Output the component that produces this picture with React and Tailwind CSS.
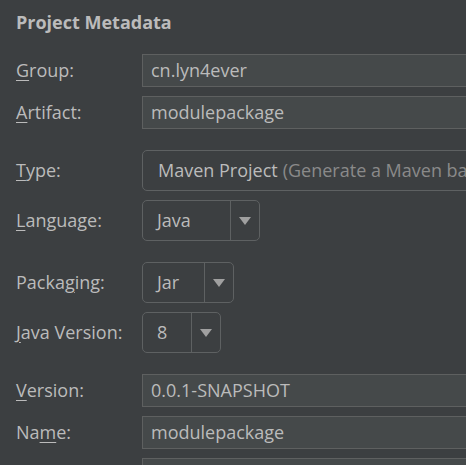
const font = { fontFamily: '"Open Sans", "Noto Sans", sans-serif' }

function Label({ pre, u, post }) {
  return (
    <span className="text-[18px] text-[#bbbbbb] leading-none">
      {pre}
      <span className="underline underline-offset-[3px] decoration-1">{u}</span>
      {post}
    </span>
  )
}

function TextField({ value }) {
  return (
    <div className="h-[33px] w-[340px] shrink-0 bg-[#45494a] border border-[#5e6060] flex items-center pl-[8px] text-[18px] text-[#bbbbbb]">
      {value}
    </div>
  )
}

function Combo({ value, width }) {
  return (
    <div className={`h-[41px] ${width} shrink-0 border border-[#5e6162] rounded-[5px] flex items-stretch`}>
      <div className="flex-1 flex items-center pl-[14px] text-[18px] text-[#bbbbbb]">{value}</div>
      <div className="w-[29px] border-l border-[#5e6162] flex items-center justify-center">
        <svg width="12" height="8" viewBox="0 0 12 8"><path d="M0 0h12L6 8z" fill="#a0a0a0" /></svg>
      </div>
    </div>
  )
}

function Row({ label, children }) {
  return (
    <div className="flex items-center">
      <div className="w-[126px] shrink-0">{label}</div>
      {children}
    </div>
  )
}

export default function App() {
  return (
    <div className="w-[466px] h-[465px] overflow-hidden bg-[#3c3f41] pl-4" style={font}>
      <h1 className="pt-[9px] text-[18px] font-bold text-[#bbbbbb] leading-[26px]">Project Metadata</h1>

      <div className="mt-[19px] flex flex-col gap-[9px]">
        <Row label={<Label u="G" post="roup:" />}><TextField value="cn.lyn4ever" /></Row>
        <Row label={<Label u="A" post="rtifact:" />}><TextField value="modulepackage" /></Row>
      </div>

      <div className="mt-[21px] flex flex-col gap-[9px]">
        <Row label={<Label u="T" post="ype:" />}>
          <div className="h-[41px] w-[340px] shrink-0 overflow-hidden border border-[#5e6162] rounded-[5px] flex items-center pl-[15px] text-[18px] text-[#bbbbbb] whitespace-nowrap">
            Maven Project <span className="ml-[5px] text-[#8a8a8a]">(Generate a Maven ba</span>
          </div>
        </Row>
        <Row label={<Label u="L" post="anguage:" />}><Combo value="Java" width="w-[118px]" /></Row>
      </div>

      <div className="mt-[21px] flex flex-col gap-[9px]">
        <Row label={<Label pre="Packa" u="g" post="ing:" />}><Combo value="Jar" width="w-[92px]" /></Row>
        <Row label={<Label u="J" post="ava Version:" />}><Combo value="8" width="w-[79px]" /></Row>
      </div>

      <div className="mt-[21px] flex flex-col gap-[9px]">
        <Row label={<Label u="V" post="ersion:" />}><TextField value="0.0.1-SNAPSHOT" /></Row>
        <Row label={<Label pre="Na" u="m" post="e:" />}><TextField value="modulepackage" /></Row>
        <Row label={<span />}><TextField value="" /></Row>
      </div>
    </div>
  )
}
